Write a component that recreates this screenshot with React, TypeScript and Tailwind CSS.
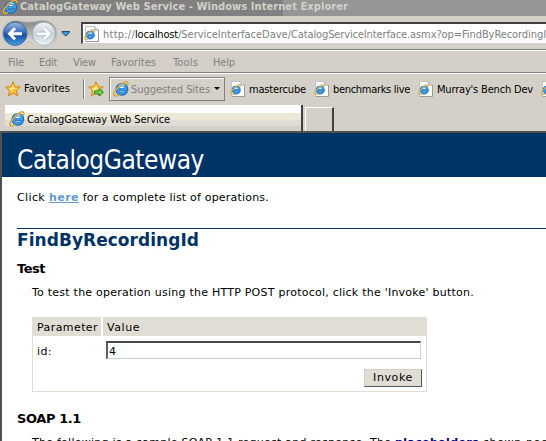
import { useLayoutEffect, useRef } from 'react';

const tahoma = "font-['DejaVu_Sans_Condensed','DejaVu_Sans',sans-serif] [font-stretch:condensed]";

/** One line of text whose letters are spread evenly over the given width. */
function Line({ text, width, className = '' }: { text: string; width: number; className?: string }) {
  const ref = useRef<HTMLSpanElement>(null);
  useLayoutEffect(() => {
    const node = ref.current;
    if (!node) return;
    node.style.letterSpacing = '0px';
    node.style.letterSpacing = `${(width - node.getBoundingClientRect().width) / text.length}px`;
  }, [text, width]);
  return <span ref={ref} className={`inline-block shrink-0 whitespace-pre ${className}`}>{text}</span>;
}

function ExplorerGlyph() {
  return (
    <>
      <path d="M13.4 10.2C12.5 12 11 13 8.9 13C6 13 4.2 11.2 4.2 8.4S6.2 3.7 8.9 3.7S13.6 5.6 13.6 8.6H5" fill="none" stroke="#1c66b8" strokeWidth="3.3" />
      <path d="M13 10.2C12 11.9 10.8 12.6 8.9 12.6C6.3 12.6 4.6 11 4.6 8.4S6.4 4.1 8.9 4.1S13.1 5.8 13.1 8.4H5" fill="none" stroke="#3b9dea" strokeWidth="2.1" />
      <path d="M5.3 5.2Q8.6 2.6 12 5" fill="none" stroke="#9adcfa" strokeWidth="1.1" />
      <path d="M6.6 7H11Q10.6 5.5 8.9 5.5T6.6 7Z" fill="#f4f4ee" />
      <path d="M14 4.6C16.3 .8 13.4-.1 9.5 2.2C4.8 5.2.5 11 1.2 13.8C1.7 15.7 4.2 14.9 6 13.8" fill="none" stroke="#c08420" strokeWidth="1.3" />
      <path d="M14 4.2C15.8 1 13 .5 9.5 2.5C5 5.4 1 11.4 1.6 13.5C2.1 14.9 4.1 14.4 5.8 13.5" fill="none" stroke="#ffca40" strokeWidth="1" />
    </>
  );
}

function ExplorerIcon() {
  return <svg className="size-4 shrink-0" viewBox="0 0 16 16"><ExplorerGlyph /></svg>;
}

function PageIcon() {
  return (
    <svg className="h-4 w-[15px] shrink-0" viewBox="0 0 15 16">
      <path d="M1.5.5H11L14.5 4V15.5H1.5Z" fill="#fff" stroke="#c4c4c4" />
      <path d="M14.5 4V15.5H2M11 1V4H14" fill="none" stroke="#999" />
      <g transform="translate(0 3.2) scale(.7)"><ExplorerGlyph /></g>
    </svg>
  );
}

function Star({ add = false }: { add?: boolean }) {
  return (
    <svg className="size-4 shrink-0" viewBox="0 0 16 16">
      <path d="M8 .8L10.1 5.7L15.3 6.1L11.4 9.6L12.7 15L8 12L3.3 15L4.6 9.6L.7 6.1L5.9 5.7Z" fill="#ffc02d" stroke="#cf8519" strokeLinejoin="round" />
      <path d="M8 3L9.2 6.9L12.8 7.2L8 8.2L5.2 12L5.8 9.3L3.5 7L6.9 6.6Z" fill="#ffe690" />
      {add && <path d="M6.5 10H11V7.5L15.5 11.2L11 15V12.8H6.5Z" fill="#72d749" stroke="#21892a" />}
    </svg>
  );
}

function Navigation() {
  return (
    <svg className="h-[30px] w-[75px] shrink-0" viewBox="0 0 75 30">
      <defs>
        <linearGradient id="back" x2="0" y2="1"><stop stopColor="#9cb9e1" /><stop offset=".42" stopColor="#3973bd" /><stop offset=".55" stopColor="#174d9c" /><stop offset="1" stopColor="#4ba3e8" /></linearGradient>
        <linearGradient id="forward" x2="0" y2="1"><stop stopColor="#f5f7f9" /><stop offset=".5" stopColor="#c7d0d8" /><stop offset="1" stopColor="#eef5f9" /></linearGradient>
        <linearGradient id="rim" x2="0" y2="1"><stop stopColor="#858585" /><stop offset=".5" stopColor="#b2b3b3" /><stop offset="1" stopColor="#f3f3f1" /></linearGradient>
      </defs>
      <path d="M15 1.5C20 1.5 24 3 29 3S38 1.5 43 1.5C51 1.5 57 7 57 15S51 28 43 28C36 28 33 23 29 23S22 28 15 28C8 28 2 22 2 15S8 1.5 15 1.5Z" fill="url(#rim)" stroke="#c1c0bc" />
      <circle cx="15.2" cy="14.8" r="11.7" fill="url(#back)" stroke="#3466a0" />
      <circle cx="43.8" cy="14.8" r="11.7" fill="url(#forward)" stroke="#9ba9b6" />
      <path d="M22 14.8H10M15 9.3L9.5 14.8L15 20.3" fill="none" stroke="#fff" strokeWidth="3" />
      <path d="M37 14.8H49M44 9.3L49.5 14.8L44 20.3" fill="none" stroke="#a8b1b8" strokeWidth="4" />
      <path d="M37 14.8H49M44 9.3L49.5 14.8L44 20.3" fill="none" stroke="#fff" strokeWidth="2.7" />
      <path d="M62 12.5H69.5V13.5L65.8 17L62 13.5Z" fill="#3a9bd0" stroke="#174f7b" />
    </svg>
  );
}

export default function App() {
  return (
    <div className="h-[441px] w-[546px] overflow-hidden bg-white font-['DejaVu_Sans',Verdana,sans-serif] text-[11px] leading-[16px] text-black">
      <div className={`whitespace-nowrap bg-[#d4d0c8] ${tahoma}`}>
        <div className="flex h-4 items-start overflow-hidden bg-[linear-gradient(to_right,#808080_283px,#969696_283px)] pl-0.5 font-bold text-[#d4d0c8]">
          <div className="-mt-px"><ExplorerIcon /></div>
          <Line text="CatalogGateway Web Service - Windows Internet Explorer" width={328} className="-mt-px ml-0.5" />
        </div>
        <div className="flex h-[33px] pt-[3px]">
          <div className="w-[81px] shrink-0"><Navigation /></div>
          <div className="mt-[3px] flex h-[22px] min-w-0 grow items-center overflow-hidden border-t-2 border-b border-l-2 border-t-[#404040] border-b-[#d4d0c8] border-l-[#505050] bg-white pl-px text-[#808080]">
            <PageIcon />
            <div className="mt-0.5 ml-1 flex">
              <Line text="http://" width={32} />
              <Line text="localhost" width={43} className="text-black" />
              <Line text="/ServiceInterfaceDave/" width={113} />
              <Line text="CatalogServiceInterface" width={116} />
              <Line text=".asmx?op=" width={55} />
              <Line text="FindByRecordingI" width={84} />
            </div>
          </div>
        </div>
        <div className="flex h-[24px] items-center border-y border-t-[#808080] border-b-[#808080] pt-[3px] pl-2 text-[#808080] shadow-[inset_0_1px_white]">
          <div className="w-[31px]"><Line text="File" width={16} /></div>
          <div className="w-[34px]"><Line text="Edit" width={18} /></div>
          <div className="w-[38px]"><Line text="View" width={23} /></div>
          <div className="w-[62px]"><Line text="Favorites" width={45} /></div>
          <div className="w-10"><Line text="Tools" width={25} /></div>
          <Line text="Help" width={22} />
        </div>
        <div className="flex h-8 items-center border-t border-white pb-0.5 pl-[5px]">
          <Star /><div className="ml-[3px] w-[59px] shrink-0 pt-px"><Line text="Favorites" width={46} /></div>
          <div className="mr-[3px] h-5 w-0.5 shrink-0 border-r border-l border-r-white border-l-[#808080]" />
          <Star add />
          <div className="ml-[5px] flex h-6 w-[116px] shrink-0 items-center border border-[#808080] pl-[3px] text-[#808080] shadow-[inset_1px_1px_white]">
            <ExplorerIcon /><Line text="Suggested Sites" width={79} className="mt-0.5 ml-[2px]" />
            <svg className="ml-[4px] h-[3px] w-[6px] shrink-0" viewBox="0 0 6 3"><path d="M0 0H6L3 3Z" fill="black" /></svg>
          </div>
          <div className="ml-[5px] flex w-[84px] shrink-0 items-center gap-1"><PageIcon /><Line text="mastercube" width={57} className="mt-0.5" /></div>
          <div className="flex w-[104px] shrink-0 items-center gap-1"><PageIcon /><Line text="benchmarks live" width={77} className="mt-0.5" /></div>
          <div className="flex w-[123px] shrink-0 items-center gap-1"><PageIcon /><Line text="Murray's Bench Dev" width={96} className="mt-0.5" /></div>
          <div className="w-[5px] overflow-hidden"><PageIcon /></div>
        </div>
        <div className="flex h-[26px] items-end pl-[5px]">
          <div className="flex h-[26px] w-[298px] items-center border-r-2 border-[#404040] bg-[linear-gradient(white_8px,#ece9d8_8px,#ece9d8_15px,#dfdcd5_15px,#dfdcd5_21px,#d4d0c8_21px)] pt-0.5 pl-1">
            <ExplorerIcon /><Line text="CatalogGateway Web Service" width={143} className="mt-px ml-0.5" />
          </div>
          <div className="ml-0.5 h-6 w-[29px] border-t border-r-2 border-l border-t-white border-r-[#404040] border-l-white" />
        </div>
      </div>

      <div className="h-[310px] overflow-hidden border-t-2 border-l-2 border-t-[#505050] border-l-[#505050]">
        <h1 className={`h-11 bg-[#003366] pt-[11px] pl-[15px] text-[26px] leading-[32px] text-white ${tahoma}`}><Line text="CatalogGateway" width={187} /></h1>
        <main className="pl-[15px] whitespace-nowrap">
          <p className="flex h-[51px] pt-[13px]">
            <Line text="Click " width={32} />
            <a className="font-bold text-[#6699cc] underline"><Line text="here" width={30} className="underline" /></a>
            <Line text=" for a complete list of operations." width={190} />
          </p>
          <h2 className="h-[33px] border-t border-[#003366] text-[17px] leading-[23px] font-bold text-[#003366]"><Line text="FindByRecordingId" width={182} /></h2>
          <h3 className="h-[23px] text-[13px] leading-[16px] font-bold"><Line text="Test" width={28} /></h3>
          <div className="pl-[15px]">
            <p className="h-[33px] pt-px"><Line text="To test the operation using the HTTP POST protocol, click the 'Invoke' button." width={442} /></p>
            <div className="h-[75px] w-[395px] border border-t-0 border-[#e0ddd5]">
              <div className="-mx-px flex h-[19px] bg-[#e0ddd5]">
                <div className="w-[71px] border-r-2 border-white pt-[3px] pl-[5px]"><Line text="Parameter" width={61} /></div>
                <div className="pt-[3px] pl-1"><Line text="Value" width={33} /></div>
              </div>
              <div className="flex h-[33px] pt-[5px] pl-1">
                <div className="w-[69px] pt-[3px]"><Line text="id:" width={15} /></div>
                <input className="h-[18px] w-[315px] border border-t-2 border-l-2 border-t-[#484848] border-r-[#d4d0c8] border-b-[#d4d0c8] border-l-[#606060] pt-px pl-px outline-none" defaultValue="4" />
              </div>
              <div className="flex justify-end pr-1">
                <button className="h-[18px] w-[58px] border border-t-[#d4d0c8] border-r-[#555] border-b-[#555] border-l-[#d4d0c8] bg-[#e0ddd5] leading-[16px]"><Line text="Invoke" width={40} /></button>
              </div>
            </div>
          </div>
          <h3 className="mt-[18px] h-[25px] text-[13px] leading-[18px] font-bold"><Line text="SOAP 1.1" width={64} /></h3>
          <p className="flex pl-[15px]">
            <Line text="The following is a sample SOAP 1.1 request and response. The " width={363} />
            <Line text="placeholders" width={84} className="font-bold text-[#000080]" />
            <Line text=" shown need to be replaced with actual values." width={290} />
          </p>
        </main>
      </div>
    </div>
  );
}
